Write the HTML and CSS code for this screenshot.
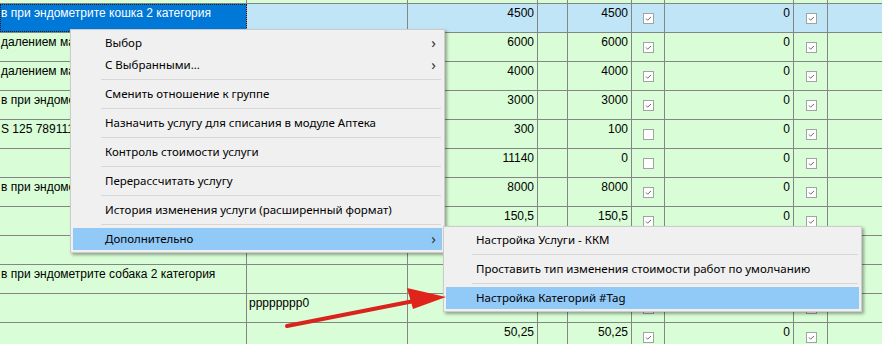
FILE: index.html
```html
<!DOCTYPE html>
<html lang="ru">
<head>
  <meta charset="UTF-8">
  <title>Услуги</title>
  <link rel="stylesheet" href="styles.css">
</head>
<body>

<div class="grid" id="grid"></div>

<div class="menu main-menu">
  <div class="item">Выбор<span class="chev">&rsaquo;</span></div>
  <div class="item">С Выбранными...<span class="chev">&rsaquo;</span></div>
  <div class="sep"></div>
  <div class="item">Сменить отношение к группе</div>
  <div class="sep"></div>
  <div class="item">Назначить услугу для списания в модуле Аптека</div>
  <div class="sep"></div>
  <div class="item">Контроль стоимости услуги</div>
  <div class="sep"></div>
  <div class="item">Перерассчитать услугу</div>
  <div class="sep"></div>
  <div class="item">История изменения услуги (расширенный формат)</div>
  <div class="sep"></div>
  <div class="item active">Дополнительно<span class="chev">&rsaquo;</span></div>
</div>

<div class="menu sub-menu">
  <div class="item">Настройка Услуги - ККМ</div>
  <div class="sep"></div>
  <div class="item">Проставить тип изменения стоимости работ по умолчанию</div>
  <div class="sep"></div>
  <div class="item active">Настройка Категорий #Tag</div>
</div>

<svg class="arrow" width="882" height="344" viewBox="0 0 882 344">
  <path d="M287 326 L414 301" stroke="#d9231c" stroke-width="4" stroke-linecap="round" fill="none"/>
  <path d="M446 297 L407 288 L413 309 Z" fill="#e0241c"/>
</svg>

<script>
  // name, col2, price, col4, price2, check1, sum, check2
  const rows = [
    ["", "", "", "", "", 1, "", 1],
    ["в при эндометрите кошка 2 категория", "", "4500", "", "4500", 1, "0", 1],
    ["далением мат", "", "6000", "", "6000", 1, "0", 1],
    ["далением мат", "", "4000", "", "4000", 1, "0", 1],
    ["в при эндомет", "", "3000", "", "3000", 1, "0", 1],
    ["S 125 789111", "", "300", "", "100", 0, "0", 1],
    ["", "", "11140", "", "0", 0, "0", 1],
    ["в при эндомет", "", "8000", "", "8000", 1, "0", 1],
    ["", "", "150,5", "", "150,5", 1, "0", 1],
    ["", "", "", "", "", 1, "", 1],
    ["в при эндометрите собака 2 категория", "", "", "", "", 1, "", 1],
    ["", "pppppppp0", "", "", "", 1, "", 1],
    ["", "", "50,25", "", "50,25", 1, "0", 1]
  ];

  const box = '<svg width="11" height="11" viewBox="0 0 11 11"><rect x="0.5" y="0.5" width="10" height="10" fill="#fff" stroke="#a3a3a3"/>';
  const tick = '<path d="M3 5.5 L4.6 7.2 L8 4" stroke="#6d6d6d" stroke-width="1" fill="none"/>';

  function check(on) {
    return '<span class="cb">' + box + (on ? tick : "") + '</svg></span>';
  }

  let html = "";
  rows.forEach(function(r, i) {
    html += '<div class="row' + (i === 1 ? ' selected' : '') + '">';
    html += '<div class="cell c1"><span>' + r[0] + '</span></div>';
    html += '<div class="cell c2">' + r[1] + '</div>';
    html += '<div class="cell c3 num">' + r[2] + '</div>';
    html += '<div class="cell c4">' + r[3] + '</div>';
    html += '<div class="cell c5 num">' + r[4] + '</div>';
    html += '<div class="cell c6 chk">' + check(r[5]) + '</div>';
    html += '<div class="cell c7 num">' + r[6] + '</div>';
    html += '<div class="cell c8 chk">' + check(r[7]) + '</div>';
    html += '<div class="cell c9"></div>';
    html += '</div>';
  });
  document.getElementById("grid").innerHTML = html;
</script>

</body>
</html>
```

FILE: styles.css
```css
body {
  margin: 0;
  width: 882px;
  height: 344px;
  overflow: hidden;
  position: relative;
  background: #d9fdd6;
  font-family: "Liberation Sans", Arial, sans-serif;
  font-size: 12px;
}
.grid {
  margin-top: -25px;
}
.row {
  display: flex;
  height: 29px;
  box-sizing: border-box;
  border-bottom: 1px solid #858585;
  background: #d9fdd6;
}
.row.selected {
  background: #bfe5f6;
}
.cell {
  box-sizing: border-box;
  border-right: 1px solid #858585;
  padding: 2px 3px 0 2px;
  line-height: 14px;
  white-space: nowrap;
  overflow: hidden;
  color: #000;
}
.c1 { width: 247px; padding-left: 1px; }
.c2 { width: 161px; }
.c3 { width: 130px; }
.c4 { width: 30px; }
.c5 { width: 64px; }
.c6 { width: 33px; }
.c7 { width: 129px; }
.c8 { width: 34px; }
.c9 { flex: 1; border-right: none; }
.num {
  text-align: right;
}
.chk {
  padding: 9px 0 0 1px;
  text-align: center;
  line-height: 0;
}
.cb svg {
  display: inline-block;
}
.row.selected .c1 {
  background: #0078d7;
  color: #fff;
  outline: 1px dotted #1a1a1a;
  outline-offset: -1px;
}

.menu {
  position: absolute;
  background: #f0f0f0;
  border: 1px solid #cccccc;
  padding: 2px;
  box-shadow: 2px 2px 3px rgba(0,0,0,0.35);
  font-family: "Noto Sans", "Open Sans", sans-serif;
  font-size: 11.5px;
  color: #000;
}
.main-menu {
  left: 70px;
  top: 29px;
  width: 369px;
}
.sub-menu {
  left: 443px;
  top: 226px;
  width: 413px;
}
.item {
  position: relative;
  height: 22px;
  line-height: 22px;
  padding-left: 32px;
  white-space: nowrap;
}
.sub-menu .item {
  padding-left: 30px;
}
.item.active {
  background: #91c9f7;
}
.chev {
  position: absolute;
  right: 6px;
  top: -1px;
  font-size: 15px;
  color: #333;
}
.sep {
  height: 7px;
  position: relative;
}
.sep::after {
  content: "";
  position: absolute;
  left: 28px;
  right: 1px;
  top: 3px;
  border-top: 1px solid #d7d7d7;
}
.sub-menu .sep::after {
  left: 26px;
}
.arrow {
  position: absolute;
  left: 0;
  top: 0;
  pointer-events: none;
}
```
